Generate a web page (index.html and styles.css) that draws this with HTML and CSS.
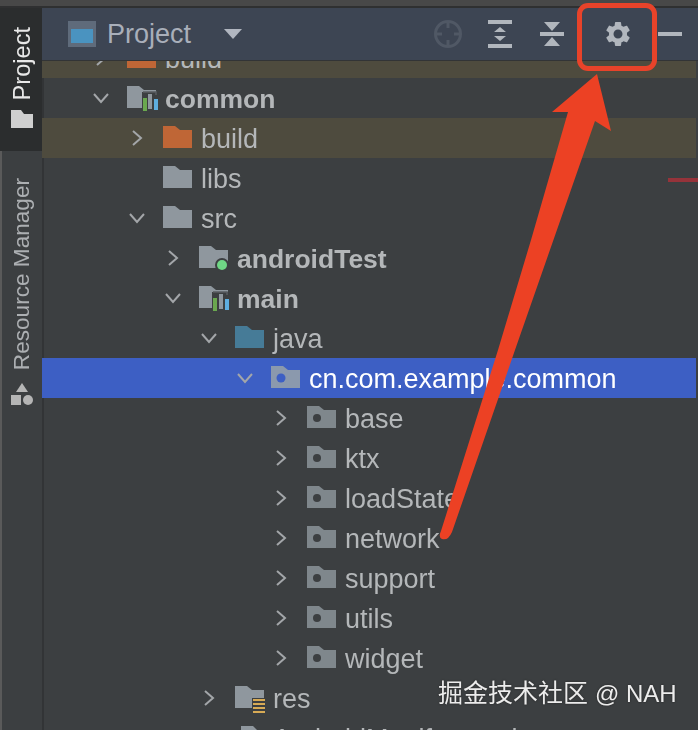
FILE: index.html
```html
<!DOCTYPE html>
<html lang="en">

<head>
    <meta charset="utf-8">
    <meta name="viewport" content="width=device-width, initial-scale=1.0">
    <title>Project</title>

    <link rel="stylesheet" href="styles.css">
</head>

<body>
    <svg class="defs" width="0" height="0">
        <symbol id="chev-r" viewBox="0 0 16 16">
            <path d="M4 1l8 7-8 7" fill="none" stroke="#a3a6a9" stroke-width="2"/>
        </symbol>
        <symbol id="chev-d" viewBox="0 0 16 16">
            <path d="M1 4l7 8 7-8" fill="none" stroke="#a3a6a9" stroke-width="2"/>
        </symbol>
        <symbol id="folder" viewBox="0 0 32 26">
            <path d="M0 1h12l5 4h12v18H0z"/>
        </symbol>
    </svg>

    <div class="topline"></div>

    <div class="window">
        <aside class="sidebar">
            <div class="tab active">
                <span class="vtext">Project</span>
                <svg class="tabicon" viewBox="0 0 22 18"><path d="M0 0h10l3 4h9v14H0z" fill="#cfcfcf"/></svg>
            </div>
            <div class="tab">
                <span class="vtext">Resource Manager</span>
                <svg class="tabicon res" viewBox="0 0 22 22">
                    <path d="M11 0l6 9H5z" fill="#b5b5b5"/>
                    <rect x="0" y="12" width="10" height="10" fill="#b5b5b5"/>
                    <circle cx="17" cy="17" r="5" fill="#b5b5b5"/>
                </svg>
            </div>
        </aside>

        <section class="panel">
            <header class="head">
                <svg class="winicon" viewBox="0 0 28 26">
                    <rect x="0" y="0" width="28" height="26" fill="#5f6b7b"/>
                    <rect x="3" y="8" width="22" height="14" fill="#4a93c0"/>
                </svg>
                <span class="title">Project</span>
                <svg class="caret" viewBox="0 0 18 10"><path d="M0 0h18l-9 10z" fill="#b1b6c0"/></svg>

                <nav class="tools">
                    <svg class="tool" viewBox="0 0 30 30">
                        <circle cx="15" cy="15" r="12.5" fill="none" stroke="#505865" stroke-width="3"/>
                        <path d="M15 3v6M15 21v6M3 15h6M21 15h6" stroke="#505865" stroke-width="3"/>
                    </svg>
                    <svg class="tool" viewBox="0 0 30 30">
                        <path d="M3 1h24v4H3zM3 25h24v4H3zM15 8l6 5H9zM15 22l-6-5h12z" fill="#b1b6bd"/>
                    </svg>
                    <svg class="tool" viewBox="0 0 30 30">
                        <path d="M3 13h24v4H3zM7 3h16l-8 9zM15 18l8 9H7z" fill="#b1b6bd"/>
                    </svg>
                    <svg class="tool gear" viewBox="0 0 24 24">
                        <path fill="#b1b6bd" d="M19.14 12.94c.04-.3.06-.61.06-.94 0-.32-.02-.64-.07-.94l2.03-1.58c.18-.14.23-.41.12-.61l-1.92-3.32c-.12-.22-.37-.29-.59-.22l-2.39.96c-.5-.38-1.03-.7-1.62-.94l-.36-2.54c-.04-.24-.24-.41-.48-.41h-3.84c-.24 0-.43.17-.47.41l-.36 2.54c-.59.24-1.13.57-1.62.94l-2.39-.96c-.22-.08-.47 0-.59.22L2.74 8.87c-.12.21-.08.47.12.61l2.03 1.58c-.05.3-.09.63-.09.94s.02.64.07.94l-2.03 1.58c-.18.14-.23.41-.12.61l1.92 3.32c.12.22.37.29.59.22l2.39-.96c.5.38 1.03.7 1.62.94l.36 2.54c.05.24.24.41.48.41h3.84c.24 0 .44-.17.47-.41l.36-2.54c.59-.24 1.13-.56 1.62-.94l2.39.96c.22.08.47 0 .59-.22l1.92-3.32c.12-.22.07-.47-.12-.61l-2.01-1.58zM12 15.6c-1.98 0-3.6-1.62-3.6-3.6s1.62-3.6 3.6-3.6 3.6 1.62 3.6 3.6-1.62 3.6-3.6 3.6z"/>
                    </svg>
                    <svg class="tool" viewBox="0 0 30 30"><path d="M3 13h24v4H3z" fill="#b1b6bd"/></svg>
                </nav>
            </header>

            <div class="tree">
                <div class="row cut build d0">
                    <svg class="chev"><use href="#chev-r"/></svg>
                    <svg class="ico c-orange"><use href="#folder"/></svg>
                    <span>build</span>
                </div>
                <div class="row bold d0">
                    <svg class="chev"><use href="#chev-d"/></svg>
                    <svg class="ico c-grey" viewBox="0 0 32 26">
                        <use href="#folder"/>
                        <rect x="15" y="7" width="15" height="17" fill="#3c3f41"/>
                        <path d="M16 7h13v3" fill="none" stroke="#5a5e62" stroke-width="1.5"/>
                        <rect x="16" y="13" width="4" height="13" fill="#6aa84f"/>
                        <rect x="21" y="9" width="4" height="15" fill="#8f979e"/>
                        <rect x="27" y="14" width="4" height="11" fill="#5eaee0"/>
                    </svg>
                    <span>common</span>
                </div>
                <div class="row build d1">
                    <svg class="chev"><use href="#chev-r"/></svg>
                    <svg class="ico c-orange"><use href="#folder"/></svg>
                    <span>build</span>
                </div>
                <div class="row d1">
                    <i class="chev"></i>
                    <svg class="ico c-grey"><use href="#folder"/></svg>
                    <span>libs</span>
                </div>
                <div class="row d1">
                    <svg class="chev"><use href="#chev-d"/></svg>
                    <svg class="ico c-grey"><use href="#folder"/></svg>
                    <span>src</span>
                </div>
                <div class="row bold d2">
                    <svg class="chev"><use href="#chev-r"/></svg>
                    <svg class="ico c-grey" viewBox="0 0 32 26">
                        <use href="#folder"/>
                        <circle cx="23" cy="20" r="7" fill="#3c3f41"/>
                        <circle cx="23" cy="20" r="5" fill="#6fd685"/>
                    </svg>
                    <span>androidTest</span>
                </div>
                <div class="row bold d2">
                    <svg class="chev"><use href="#chev-d"/></svg>
                    <svg class="ico c-grey" viewBox="0 0 32 26">
                        <use href="#folder"/>
                        <rect x="13" y="7" width="17" height="17" fill="#3c3f41"/>
                        <path d="M14 7h14v3" fill="none" stroke="#5a5e62" stroke-width="1.5"/>
                        <rect x="14" y="13" width="4" height="13" fill="#6aa84f"/>
                        <rect x="20" y="9" width="4" height="15" fill="#8f979e"/>
                        <rect x="26" y="14" width="4" height="11" fill="#5eaee0"/>
                    </svg>
                    <span>main</span>
                </div>
                <div class="row d3">
                    <svg class="chev"><use href="#chev-d"/></svg>
                    <svg class="ico c-blue"><use href="#folder"/></svg>
                    <span>java</span>
                </div>
                <div class="row selected d4">
                    <svg class="chev"><use href="#chev-d"/></svg>
                    <svg class="ico c-sel" viewBox="0 0 32 26">
                        <use href="#folder"/>
                        <circle cx="10" cy="13" r="4.5" fill="#3d5fc4"/>
                    </svg>
                    <span>cn.com.example.common</span>
                </div>
                <div class="row d5">
                    <svg class="chev"><use href="#chev-r"/></svg>
                    <svg class="ico c-pkg" viewBox="0 0 32 26"><use href="#folder"/><circle cx="10" cy="13" r="4" fill="#3c3f41"/></svg>
                    <span>base</span>
                </div>
                <div class="row d5">
                    <svg class="chev"><use href="#chev-r"/></svg>
                    <svg class="ico c-pkg" viewBox="0 0 32 26"><use href="#folder"/><circle cx="10" cy="13" r="4" fill="#3c3f41"/></svg>
                    <span>ktx</span>
                </div>
                <div class="row d5">
                    <svg class="chev"><use href="#chev-r"/></svg>
                    <svg class="ico c-pkg" viewBox="0 0 32 26"><use href="#folder"/><circle cx="10" cy="13" r="4" fill="#3c3f41"/></svg>
                    <span>loadState</span>
                </div>
                <div class="row d5">
                    <svg class="chev"><use href="#chev-r"/></svg>
                    <svg class="ico c-pkg" viewBox="0 0 32 26"><use href="#folder"/><circle cx="10" cy="13" r="4" fill="#3c3f41"/></svg>
                    <span>network</span>
                </div>
                <div class="row d5">
                    <svg class="chev"><use href="#chev-r"/></svg>
                    <svg class="ico c-pkg" viewBox="0 0 32 26"><use href="#folder"/><circle cx="10" cy="13" r="4" fill="#3c3f41"/></svg>
                    <span>support</span>
                </div>
                <div class="row d5">
                    <svg class="chev"><use href="#chev-r"/></svg>
                    <svg class="ico c-pkg" viewBox="0 0 32 26"><use href="#folder"/><circle cx="10" cy="13" r="4" fill="#3c3f41"/></svg>
                    <span>utils</span>
                </div>
                <div class="row d5">
                    <svg class="chev"><use href="#chev-r"/></svg>
                    <svg class="ico c-pkg" viewBox="0 0 32 26"><use href="#folder"/><circle cx="10" cy="13" r="4" fill="#3c3f41"/></svg>
                    <span>widget</span>
                </div>
                <div class="row d3">
                    <svg class="chev"><use href="#chev-r"/></svg>
                    <svg class="ico c-grey" viewBox="0 0 32 26">
                        <use href="#folder"/>
                        <rect x="17" y="13" width="15" height="17" fill="#3c3f41"/>
                        <path d="M18 15h12M18 19h12M18 23h12M18 27h12" stroke="#d7aa55" stroke-width="2.2"/>
                    </svg>
                    <span>res</span>
                </div>
                <div class="row d3">
                    <i class="chev"></i>
                    <svg class="ico c-grey" viewBox="0 0 32 26"><path d="M6 1h12l6 6v18H6z"/></svg>
                    <span>AndroidManifest.xml</span>
                </div>
            </div>
        </section>
    </div>

    <!-- annotations drawn on top of the screenshot -->
    <div class="redbox"></div>
    <div class="redline"></div>
    <svg class="arrow" viewBox="0 0 698 730">
        <path d="M597 74L611 131 595 121 515 350 452 532Q448 541 442 539 438 537 441 531L498 350 531 240 568 112H552z" fill="#ec4124"/>
    </svg>
    <div class="mark">掘金技术社区 <span class="mark-latin">@ NAH</span></div>
</body>

</html>
```

FILE: styles.css
```css
body {
    margin: 0;
    height: 730px;
    overflow: hidden;
    background: #3c3f41;
    font-family: "Liberation Sans", "Noto Sans CJK SC", sans-serif;
    position: relative;
}

.defs {
    position: absolute;
}

.topline {
    height: 6px;
    background: #484848;
    border-bottom: 2px solid #2f3031;
}

.window {
    display: flex;
    height: 722px;
    filter: blur(0.4px);
}

/* left tool strip */
.sidebar {
    width: 40px;
    flex-shrink: 0;
    border-left: 2px solid #5a5a5a;
    border-right: 2px solid #323436;
    box-sizing: content-box;
    margin-right: -2px;
    color: #acafb2;
}

.tab {
    display: flex;
    flex-direction: column;
    align-items: center;
    gap: 12px;
    padding: 19px 0 23px;
}

.tab + .tab {
    padding-top: 27px;
}

.tab.active {
    gap: 10px;
    padding-bottom: 23px;
    background: #2b2d2e;
    color: #e8e8e8;
    margin-left: -2px;
    padding-left: 2px;
}

.vtext {
    writing-mode: vertical-rl;
    transform: rotate(180deg);
    font-size: 22.6px;
    line-height: 26px;
    white-space: nowrap;
}

.active .vtext {
    font-size: 23.6px;
}

.tabicon {
    width: 22px;
    height: 18px;
}

.tabicon.res {
    height: 22px;
}

/* project panel */
.panel {
    flex: 1;
    min-width: 0;
    display: flex;
    flex-direction: column;
}

.head {
    height: 52px;
    flex-shrink: 0;
    display: flex;
    align-items: center;
    padding-left: 26px;
    padding-right: 13px;
    background: #3d4553;
    border-bottom: 1px solid #323436;
}

.winicon {
    width: 28px;
    height: 26px;
}

.title {
    margin-left: 11px;
    font-size: 27px;
    color: #a9afba;
}

.caret {
    width: 18px;
    height: 10px;
    margin-left: 33px;
}

.tools {
    margin-left: auto;
    display: flex;
    align-items: center;
    gap: 22px;
}

.tool {
    width: 30px;
    height: 30px;
}

.gear {
    margin-left: 14px;
}

/* file tree */
.tree {
    flex: 1;
    overflow: hidden;
    padding-right: 2px;
}

.row {
    height: 40px;
    flex-shrink: 0;
    display: flex;
    align-items: center;
    font-size: 27px;
    color: #b4b7b9;
    white-space: nowrap;
}

.row span {
    margin-top: 2px;
}

.row.cut {
    margin-top: -23px;
}

.row.bold {
    font-weight: bold;
    font-size: 26.5px;
}

.row.build {
    background: #4e4b3e;
}

.row.selected {
    background: #3d5fc4;
    color: #fff;
}

.d0 { padding-left: 51px; }
.d1 { padding-left: 87px; }
.d2 { padding-left: 123px; }
.d3 { padding-left: 159px; }
.d4 { padding-left: 195px; }
.d5 { padding-left: 231px; }

.chev {
    width: 16px;
    height: 16px;
    margin-right: 18px;
    flex-shrink: 0;
}

.ico {
    width: 32px;
    height: 26px;
    margin-right: 6px;
    flex-shrink: 0;
    overflow: visible;
}

.c-grey { fill: #8f979e; }
.c-orange { fill: #bf6636; }
.c-blue { fill: #467b97; }
.c-sel { fill: #8b99ad; }
.c-pkg { fill: #7f878c; }

/* red annotations + watermark */
.redbox {
    position: absolute;
    left: 577px;
    top: 3px;
    width: 70px;
    height: 58px;
    border: 5px solid #e8432a;
    border-radius: 11px;
}

.redline {
    position: absolute;
    left: 668px;
    top: 178px;
    width: 30px;
    height: 4px;
    background: #96333a;
}

.arrow {
    position: absolute;
    left: 0;
    top: 0;
    width: 698px;
    height: 730px;
}

.mark {
    position: absolute;
    left: 438px;
    top: 677px;
    font-size: 25px;
    line-height: 32px;
    color: #ececec;
    text-shadow: 0 0 2px #222;
    white-space: nowrap;
}

.mark-latin {
    font-size: 24px;
}
```
